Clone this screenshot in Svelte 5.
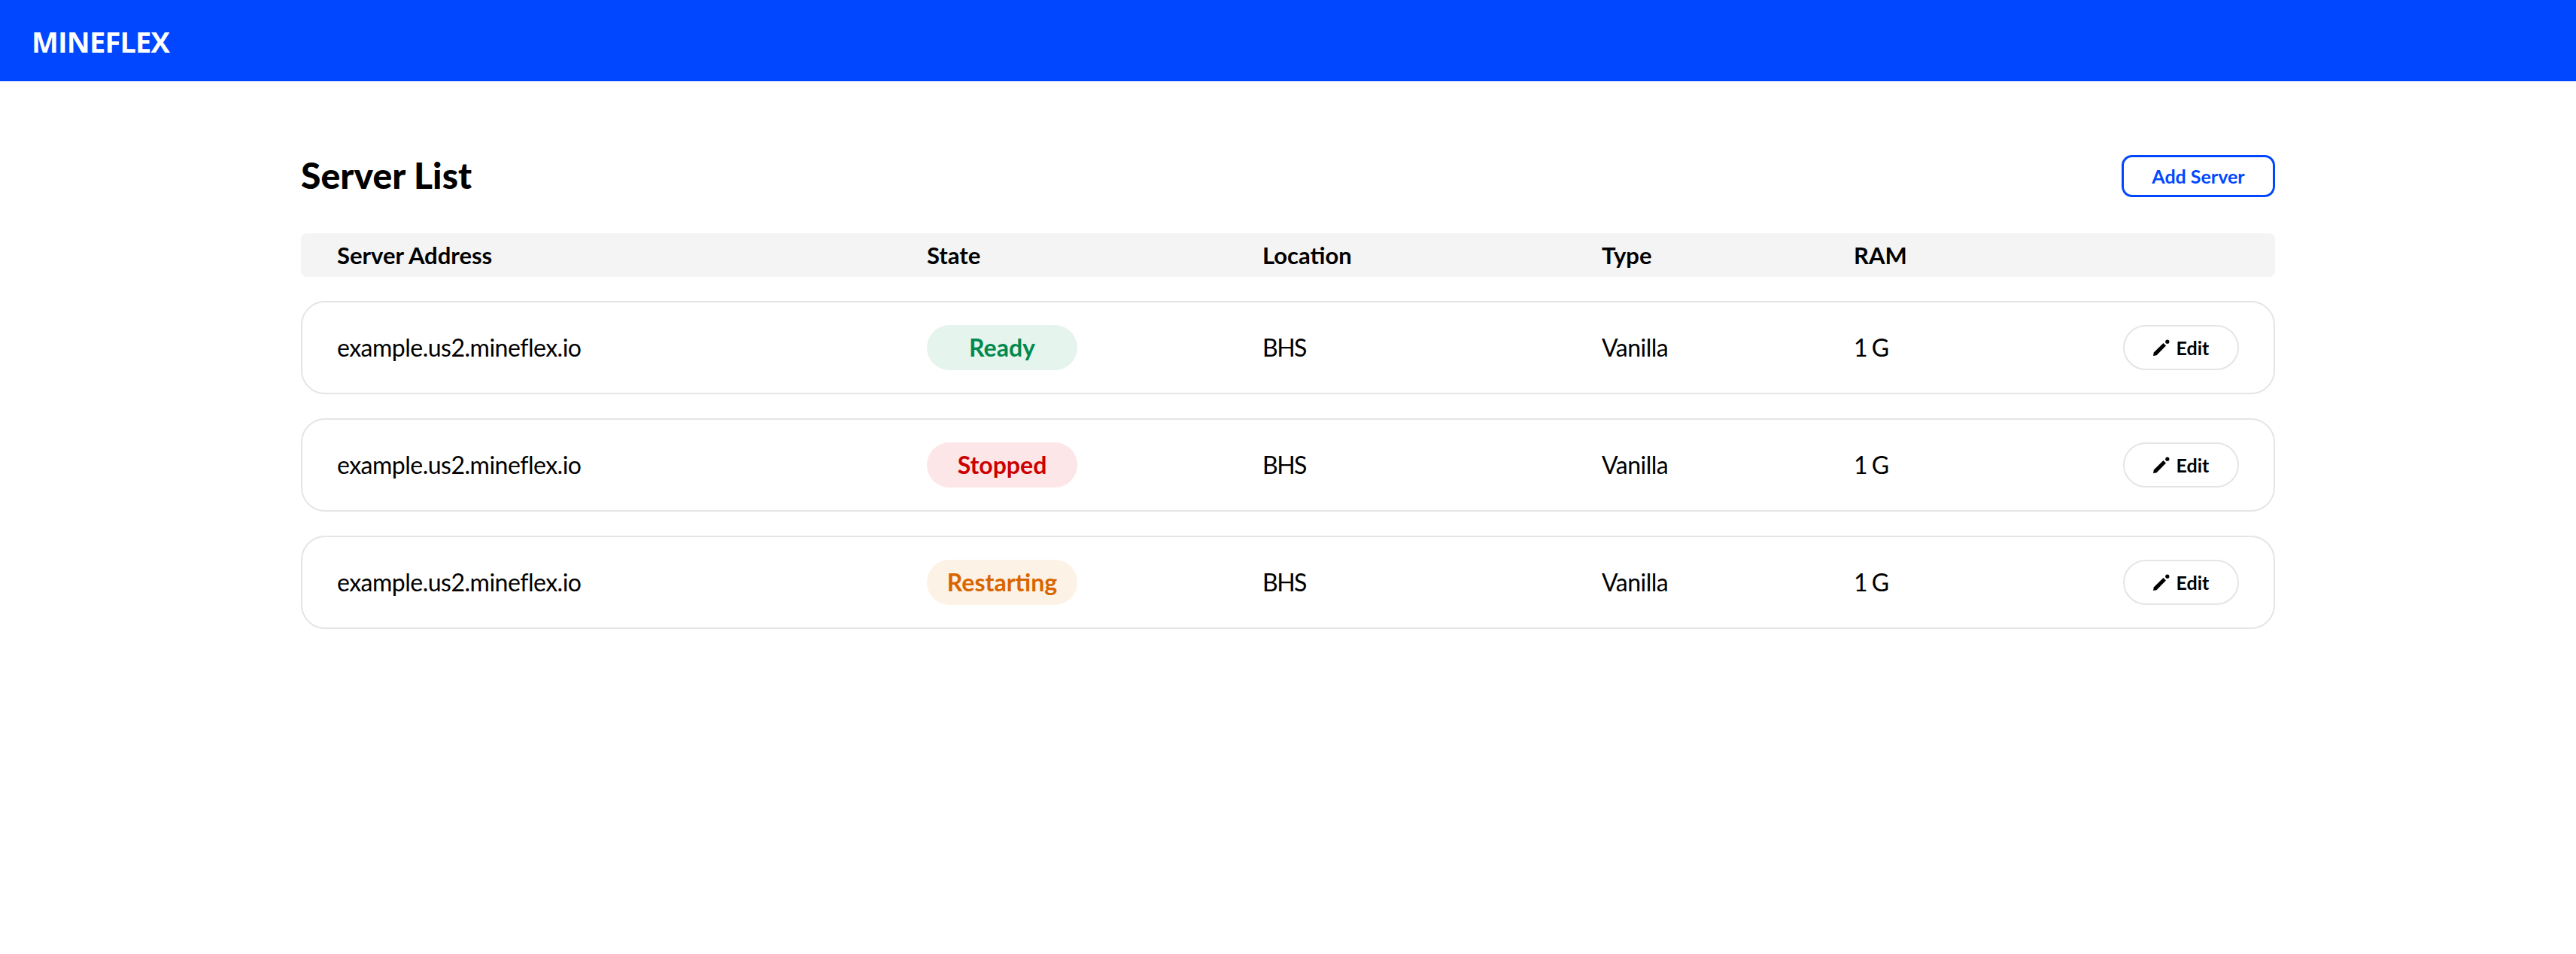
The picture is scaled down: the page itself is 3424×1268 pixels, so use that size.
<script>
    const columns = ['Server Address', 'State', 'Location', 'Type', 'RAM']
    const servers = [
        { address: 'example.us2.mineflex.io', state: 'Ready', location: 'BHS', type: 'Vanilla', ram: '1 G' },
        { address: 'example.us2.mineflex.io', state: 'Stopped', location: 'BHS', type: 'Vanilla', ram: '1 G' },
        { address: 'example.us2.mineflex.io', state: 'Restarting', location: 'BHS', type: 'Vanilla', ram: '1 G' }
    ]
</script>

<header class="topbar">
    <span class="logo">MINEFLEX</span>
</header>

<main>
    <div class="title-row">
        <h1>Server List</h1>
        <button class="add">Add Server</button>
    </div>

    <div class="row head">
        {#each columns as column}
            <span>{column}</span>
        {/each}
    </div>

    {#each servers as server}
        <div class="row server">
            <span class="cell">{server.address}</span>
            <span class="pill {server.state.toLowerCase()}">{server.state}</span>
            <span class="cell tight">{server.location}</span>
            <span class="cell">{server.type}</span>
            <span class="cell tight">{server.ram}</span>
            <button class="edit">
                <svg viewBox="0 0 22 22" width="22" height="22">
                    <path d="M0 22 L0.8 17.5 L13.5 5 L17 8.5 L4.5 21.2 Z" fill="#000" />
                    <circle cx="18.8" cy="3.2" r="2.6" fill="#000" />
                </svg>
                Edit
            </button>
        </div>
    {/each}
</main>

<style>
    :global(body) {
        background: #fff;
        color: #000;
        font-family: Lato, "Open Sans", sans-serif;
    }
    .topbar {
        display: flex;
        align-items: center;
        height: 108px;
        padding-left: 42px;
        background: #0047ff;
    }
    .logo {
        margin-top: 2px;
        color: #fff;
        font-family: "Open Sans", sans-serif;
        font-size: 38px;
        font-weight: 700;
        letter-spacing: -0.8px;
    }
    main {
        width: 2624px;
        margin: 0 auto;
        padding-top: 98px;
    }
    .title-row {
        display: flex;
        align-items: center;
        justify-content: space-between;
        height: 56px;
        margin-bottom: 48px;
    }
    h1 {
        margin: -4px 0 0;
        color: #000;
        font-size: 48px;
        font-weight: 900;
        letter-spacing: 0.1px;
    }
    .add {
        width: 204px;
        height: 56px;
        border: 3px solid #0047ff;
        border-radius: 14px;
        background: #fff;
        color: #0047ff;
        font-family: inherit;
        font-size: 25px;
        font-weight: 700;
    }
    .row {
        display: grid;
        grid-template-columns: 784px 446px 451px 335px 1fr 154px;
        align-items: center;
        padding: 0 48px;
    }
    .head {
        height: 58px;
        margin-bottom: 32px;
        border-radius: 8px;
        background: #f4f4f4;
        font-size: 31px;
        font-weight: 700;
    }
    .server {
        box-sizing: border-box;
        height: 124px;
        margin-bottom: 32px;
        border: 2px solid #e5e5e5;
        border-radius: 32px;
        padding: 0 46px;
        font-size: 32px;
        letter-spacing: -0.5px;
    }
    .cell {
        margin-top: -2px;
    }
    .tight {
        letter-spacing: -1.5px;
    }
    .pill {
        width: 200px;
        height: 60px;
        border-radius: 30px;
        font-size: 32px;
        font-weight: 700;
        letter-spacing: 0;
        line-height: 60px;
        text-align: center;
    }
    .ready {
        background: #e6f4ee;
        color: #008a4e;
    }
    .stopped {
        background: #fde6e7;
        color: #cc0000;
    }
    .restarting {
        background: #fdf2e6;
        color: #d96500;
    }
    .edit {
        display: flex;
        align-items: center;
        justify-content: center;
        gap: 9px;
        box-sizing: border-box;
        width: 154px;
        height: 60px;
        border: 2px solid #e5e5e5;
        border-radius: 30px;
        background: #fff;
        color: #000;
        font-family: inherit;
        font-size: 25px;
        font-weight: 700;
    }
</style>
